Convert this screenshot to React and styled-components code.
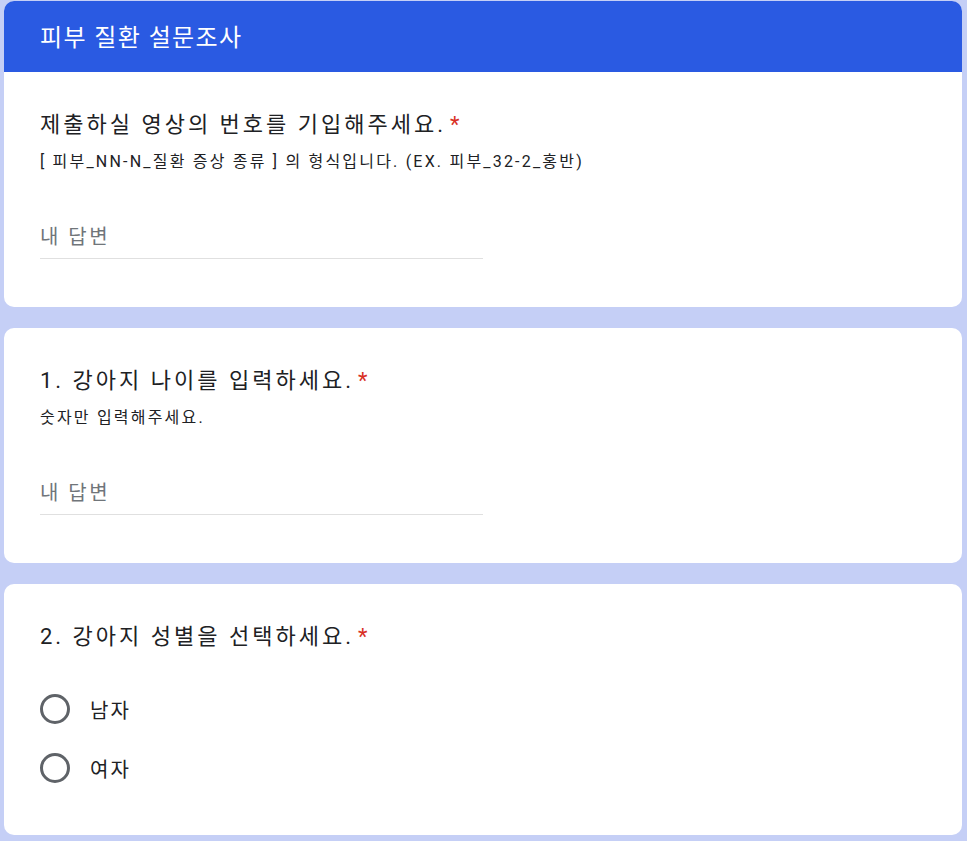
import React from 'react';
import styled, { createGlobalStyle } from 'styled-components';

const GlobalStyle = createGlobalStyle`
  html, body {
    margin: 0;
    padding: 0;
    background: #c5cff6;
  }
  body {
    font-family: Roboto, "Noto Sans CJK KR", sans-serif;
    color: #202124;
  }
`;

const Page = styled.div`
  display: flex;
  flex-direction: column;
  gap: 21px;
  padding: 1px 5px 6px 4px;
`;

const Card = styled.section`
  background: #fff;
  border-radius: 10px;
  overflow: hidden;
`;

const Banner = styled.header`
  height: 71px;
  background: #2a5ae2;
  color: #fff;
  display: flex;
  align-items: center;
  padding: 0 36px 2px;
  font-size: 24px;
  letter-spacing: 1.4px;
  box-sizing: border-box;
`;

const Body = styled.div`
  padding: 39px 36px ${(p) => p.$bottom || 48}px;
`;

const Title = styled.div`
  font-size: 22px;
  line-height: 28px;
  letter-spacing: 3px;
`;

const Star = styled.span`
  color: #d93025;
  margin-left: 4px;
  letter-spacing: 0;
`;

const Desc = styled.div`
  font-size: 16px;
  line-height: 22px;
  letter-spacing: 2.2px;
  margin-top: 12px;
`;

const Answer = styled.div`
  width: 443px;
  margin-top: 51px;
  padding-bottom: 8px;
  border-bottom: 1px solid #e0e0e0;
  font-size: 20px;
  line-height: 26px;
  letter-spacing: 2.5px;
  color: #70757a;
`;

const Options = styled.div`
  display: flex;
  flex-direction: column;
  gap: 29px;
  margin-top: 43px;
`;

const Option = styled.label`
  display: flex;
  align-items: center;
  gap: 20px;
  font-size: 20px;
  letter-spacing: 2px;
  color: #202124;
`;

const Radio = styled.span`
  width: 30px;
  height: 30px;
  box-sizing: border-box;
  border: 3px solid #5f6368;
  border-radius: 50%;
`;

function TextQuestion({ title, desc }) {
  return (
    <>
      <Title>
        {title}
        <Star>*</Star>
      </Title>
      {desc && <Desc>{desc}</Desc>}
      <Answer>내 답변</Answer>
    </>
  );
}

export default function App() {
  return (
    <>
      <GlobalStyle />
      <Page>
        <Card>
          <Banner>피부 질환 설문조사</Banner>
          <Body>
            <TextQuestion
              title="제출하실 영상의 번호를 기입해주세요."
              desc="[ 피부_NN-N_질환 증상 종류 ] 의 형식입니다. (EX. 피부_32-2_홍반)"
            />
          </Body>
        </Card>
        <Card>
          <Body>
            <TextQuestion title="1. 강아지 나이를 입력하세요." desc="숫자만 입력해주세요." />
          </Body>
        </Card>
        <Card>
          <Body $bottom={52}>
            <Title>
              2. 강아지 성별을 선택하세요.
              <Star>*</Star>
            </Title>
            <Options>
              <Option>
                <Radio />
                남자
              </Option>
              <Option>
                <Radio />
                여자
              </Option>
            </Options>
          </Body>
        </Card>
      </Page>
    </>
  );
}
